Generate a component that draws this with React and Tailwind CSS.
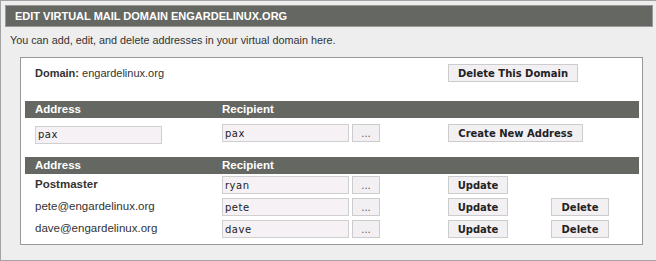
const sans = { fontFamily: '"Liberation Sans", Arial, sans-serif' };

const cols = "grid grid-cols-[197px_226px_103px_1fr] items-center";

const inputCls =
  "h-[18px] w-[127px] bg-[#f5f1f5] border border-[#cfcfcf] pl-[2px] text-[10px] tracking-[0.5px] text-[#222] font-['DejaVu_Sans',sans-serif] outline-none";

const btnCls =
  "h-[18px] bg-[#f3f0f3] border border-[#cccccc] text-[10px] font-bold text-[#222] font-['DejaVu_Sans',sans-serif] flex items-center justify-center";

function Recipient({ value }) {
  return (
    <div className="flex items-center">
      <input className={inputCls} defaultValue={value} />
      <button className={`${btnCls} w-[28px] ml-[3px] font-normal text-[#555]`}>...</button>
    </div>
  );
}

function HeaderBar() {
  return (
    <div className={`${cols} h-[17px] bg-[#656862] text-white font-bold text-[11.5px]`}>
      <div className="pl-[10px]">Address</div>
      <div>Recipient</div>
    </div>
  );
}

const rows = [
  { address: "Postmaster", bold: true, recipient: "ryan", canDelete: false },
  { address: "pete@engardelinux.org", recipient: "pete", canDelete: true },
  { address: "dave@engardelinux.org", recipient: "dave", canDelete: true },
];

export default function App() {
  return (
    <div
      style={sans}
      className="w-[656px] h-[261px] bg-[#eeeeee] border-t border-l border-b border-[#a3a3a3] pt-[4px] pl-[4px] pr-[3px] text-[#333]"
    >
      {/* title bar */}
      <div className="h-[22px] bg-[#656862] border border-[#999] flex items-center pl-[9px] text-white font-bold text-[11px]">
        EDIT VIRTUAL MAIL DOMAIN ENGARDELINUX.ORG
      </div>

      <p className="mt-[6px] pl-[5px] h-[14px] leading-[14px] text-[10.8px]">
        You can add, edit, and delete addresses in your virtual domain here.
      </p>

      {/* main panel */}
      <div className="mt-[10px] ml-[15px] w-[623px] bg-white border border-[#999] pl-[4px] pr-[3px] pt-[6px] pb-[6px]">
        <div className={`${cols} h-[18px] text-[11px]`}>
          <div className="pl-[10px] col-span-2">
            <span className="font-bold">Domain:</span> engardelinux.org
          </div>
          <div>
            <button className={`${btnCls} w-[130px]`}>Delete This Domain</button>
          </div>
        </div>

        <div className="mt-[19px]">
          <HeaderBar />
        </div>
        <div className={`${cols} mt-[3px] h-[18px]`}>
          <div className="pl-[10px]">
            <input className={inputCls} defaultValue="pax" />
          </div>
          <Recipient value="pax" />
          <div>
            <button className={`${btnCls} w-[135px]`}>Create New Address</button>
          </div>
        </div>

        <div className="mt-[18px]">
          <HeaderBar />
        </div>
        <div className="mt-[2px] flex flex-col gap-[4px]">
          {rows.map((r) => (
            <div key={r.address} className={`${cols} h-[18px] text-[11.5px]`}>
              <div className={`pl-[10px] ${r.bold ? "font-bold" : ""}`}>{r.address}</div>
              <Recipient value={r.recipient} />
              <div>
                <button className={`${btnCls} w-[60px]`}>Update</button>
              </div>
              <div>
                {r.canDelete && <button className={`${btnCls} w-[58px]`}>Delete</button>}
              </div>
            </div>
          ))}
        </div>
      </div>
    </div>
  );
}
